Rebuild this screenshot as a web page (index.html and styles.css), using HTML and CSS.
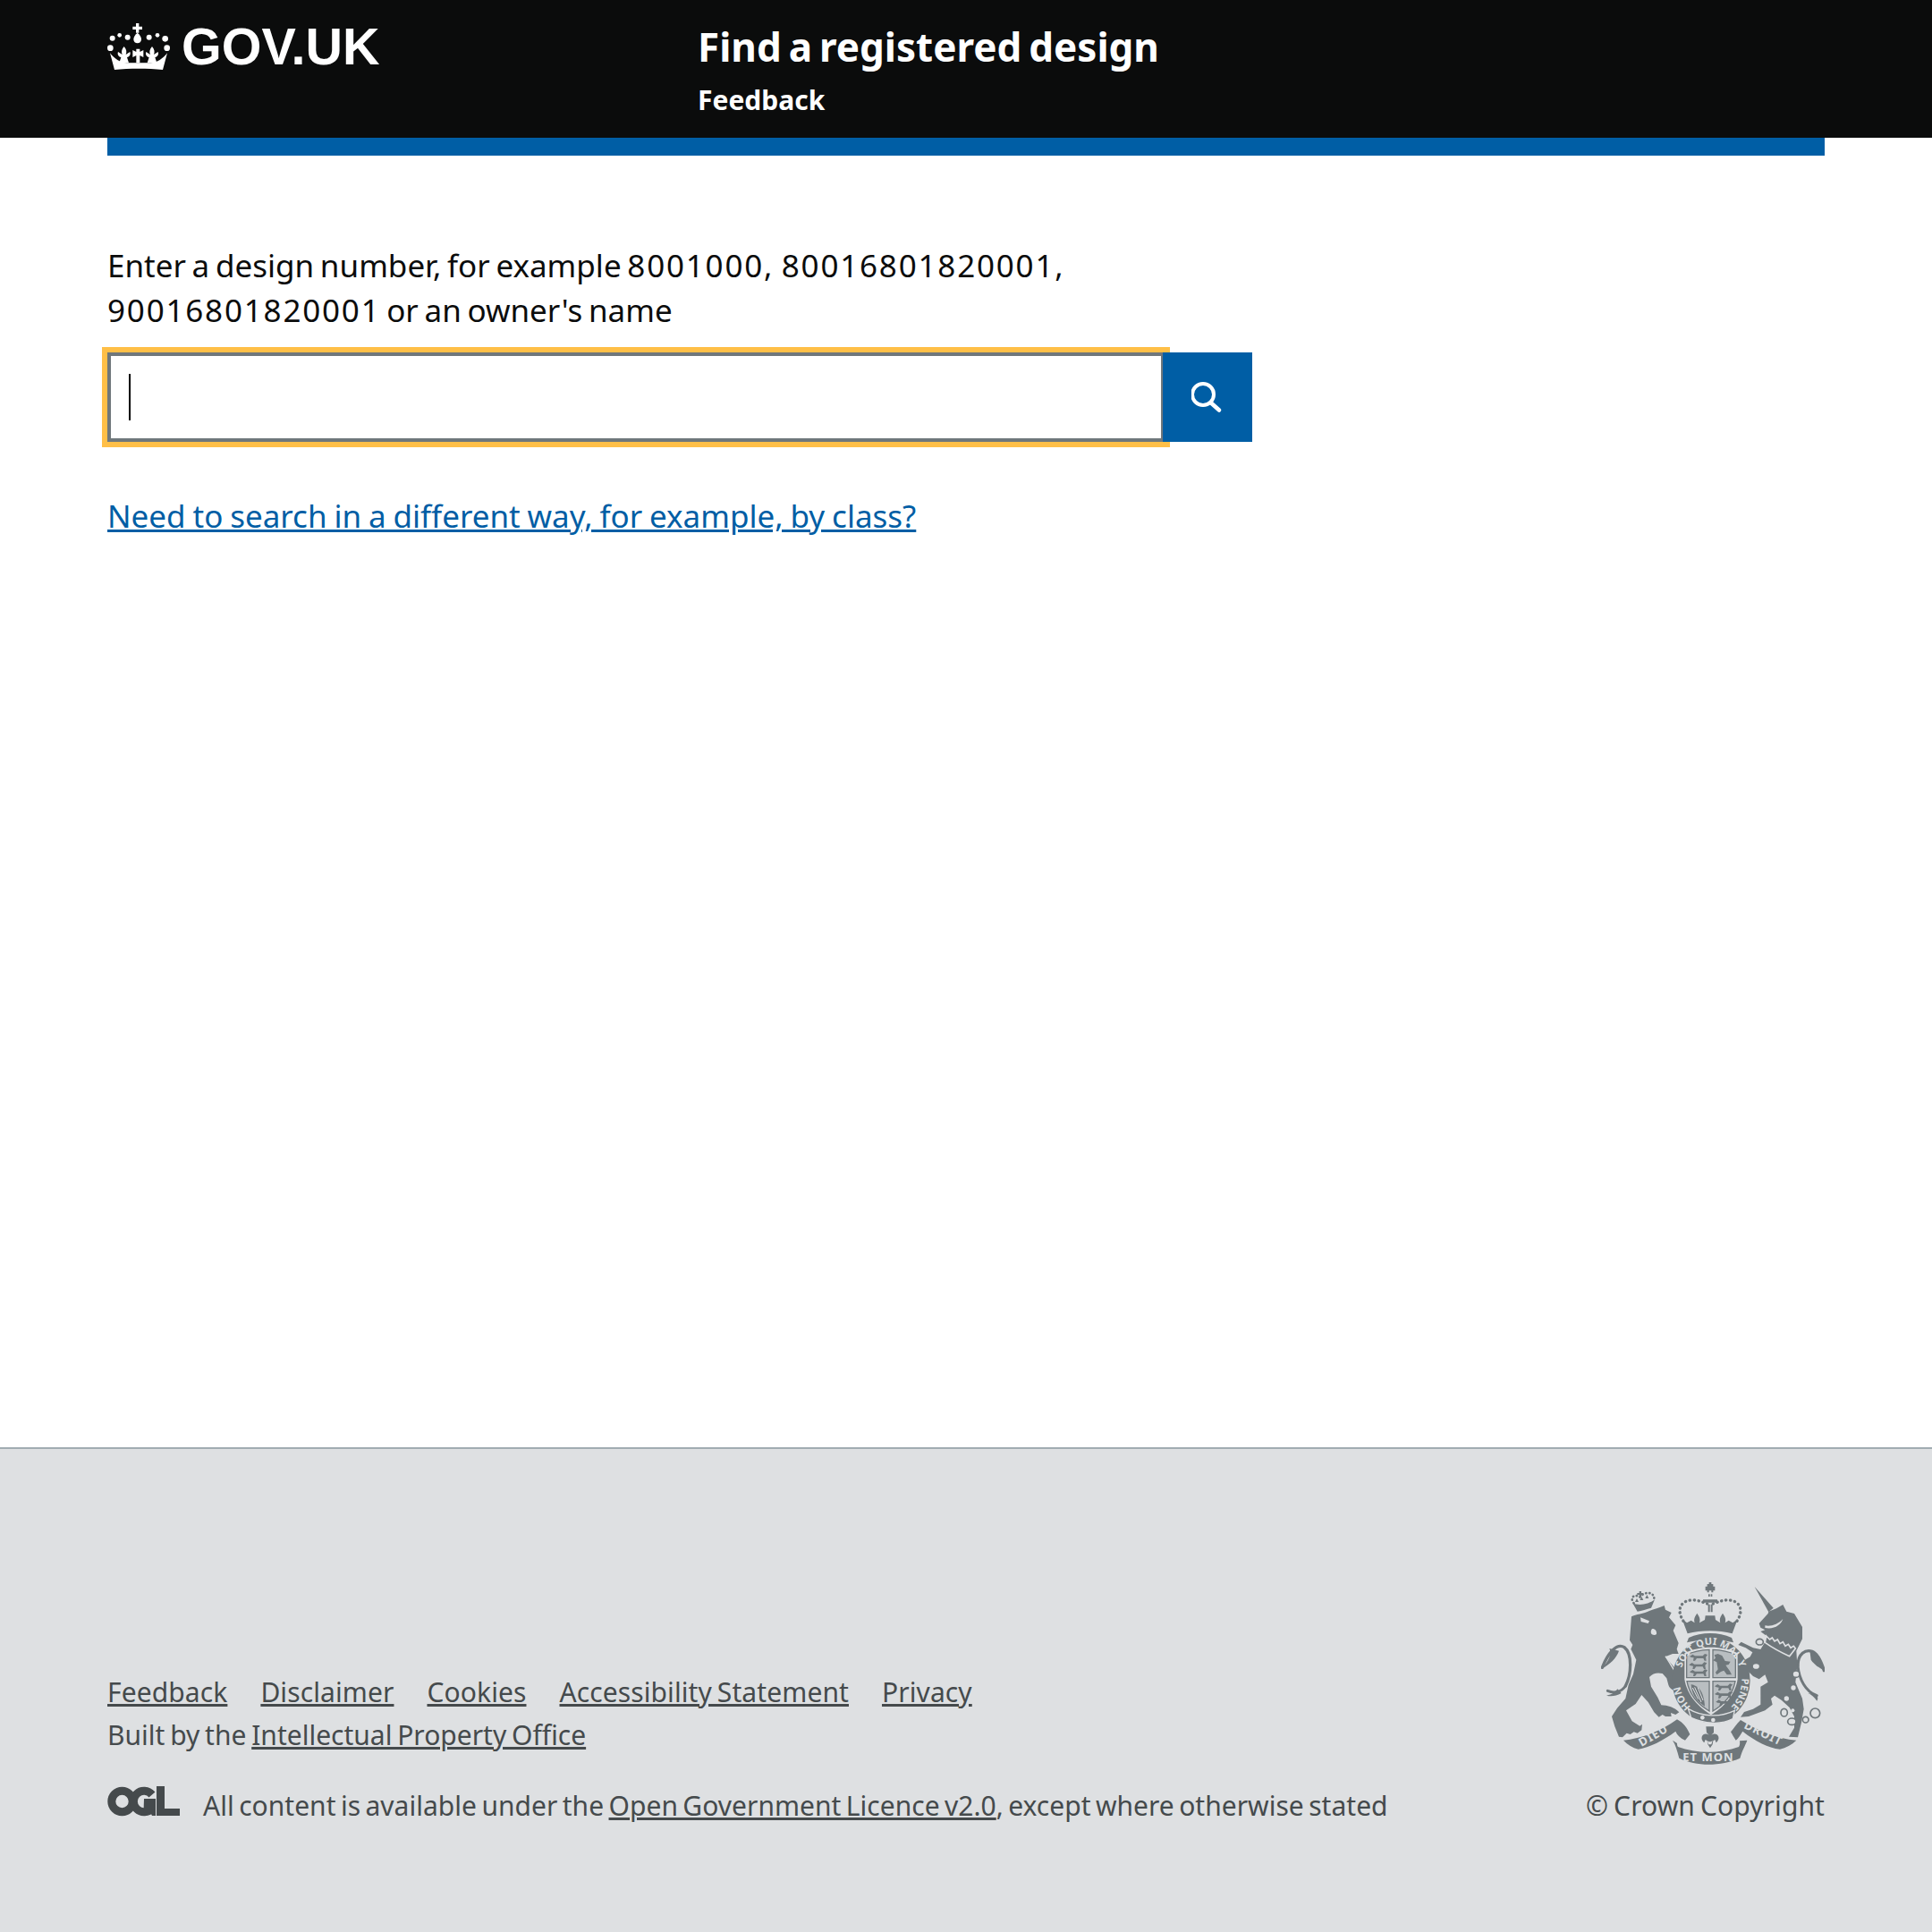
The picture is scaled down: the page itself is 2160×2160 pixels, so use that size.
FILE: index.html
```html
<!DOCTYPE html>
<html lang="en">
<head>
<meta charset="utf-8">
<title>Find a registered design</title>
<link rel="stylesheet" href="styles.css">
</head>
<body>
<header class="site-header">
  <div class="logo">
    <svg class="crown" viewBox="62 72 210 156" aria-hidden="true">
      <defs>
        <path id="fleur" d="M0 0c8 10 10 17 6 27l14-9c3 9-1 16-10 18l6 19h-32l6-19c-9-2-13-9-10-18l14 9c-4-10-2-17 6-27z"/>
      </defs>
      <g fill="#fff">
        <path d="M158 72h10v11h11v10h-11v11h-10V93h-11V83h11z"/>
        <path d="M163 104c9 7 13 15 13 22 0 8-6 13-13 13s-13-5-13-13c0-7 4-15 13-22z"/>
        <circle cx="79" cy="122" r="9"/><circle cx="103" cy="112" r="7"/><circle cx="130" cy="119" r="9"/>
        <circle cx="202" cy="119" r="9"/><circle cx="230" cy="112" r="7"/><circle cx="256" cy="124" r="10"/>
        <circle cx="72" cy="155" r="10"/><circle cx="262" cy="155" r="10"/>
        <path d="M86 228 71 172c14 18 34 33 56 33h80c22 0 42-15 56-33l-15 56c-50-5-112-5-162 0z"/>
        <use href="#fleur" x="118" y="150"/>
        <use href="#fleur" x="212" y="150"/>
        <path d="M159 158h12v10l12-6v24l-12-6v25h-12v-25l-12 6v-24l12 6z"/>
      </g>
    </svg>
    <span class="logo-text">GOV.UK</span>
  </div>
  <div class="service">
    <div class="service-name">Find a registered design</div>
    <a class="service-link" href="#">Feedback</a>
  </div>
</header>
<div class="bar-wrap"><div class="blue-bar"></div></div>
<main class="main">
  <label class="search-label" for="q">Enter a design number, for example <span class="num">8001000, 80016801820001,</span><br><span class="num">90016801820001</span> or an owner's name</label>
  <div class="search-row">
    <div class="input-wrap">
      <input id="q" class="search-input" type="text">
      <span class="caret"></span>
    </div>
    <button class="search-btn" type="button" aria-label="Search">
      <svg viewBox="0 0 36 36" class="search-icon" aria-hidden="true">
        <circle cx="13" cy="15" r="12" fill="none" stroke="#fff" stroke-width="4"/>
        <path d="M22 24.500l9 8" stroke="#fff" stroke-width="4.600" stroke-linecap="round"/>
      </svg>
    </button>
  </div>
  <a class="alt-link" href="#">Need to search in a different way, for example, by class?</a>
</main>
<footer class="footer">
  <div class="footer-left">
    <ul class="footer-links">
      <li><a href="#">Feedback</a></li>
      <li><a href="#">Disclaimer</a></li>
      <li><a href="#">Cookies</a></li>
      <li><a href="#">Accessibility Statement</a></li>
      <li><a href="#">Privacy</a></li>
    </ul>
    <p class="built">Built by the <a href="#">Intellectual Property Office</a></p>
    <div class="licence">
      <svg class="ogl" viewBox="0 0 82 34" aria-hidden="true">
        <g fill="none" stroke="#454a4c">
          <circle cx="16.500" cy="17" r="11.700" stroke-width="9"/>
          <path d="M50 9.500A11.700 11.700 0 1 0 50 24.500" stroke-width="9"/>
        </g>
        <path fill="#454a4c" d="M41 14h13v19h-4l-1.500-3-8-1zM55 0h9v25h17v8H55z"/>
      </svg>
      <span>All content is available under the <a href="#">Open Government Licence v2.0</a>, except where otherwise stated</span>
    </div>
  </div>
  <div class="footer-right">
    <svg class="crest" viewBox="90 60 750 612" role="img" aria-label="Royal coat of arms">
      <defs>
        <path id="garter" d="M391 478A104 118 0 1 1 518 484"/>
        <path id="passant" d="M0 9l10-7 8 5h26l7-7 9 3-6 8 2 12h-6l-4-8H24l-6 8h-6l2-10-8-1z"/>
      </defs>
      <g fill="none" stroke="#6f777b" stroke-linecap="round">
        <path d="M172 408C192 370 196 300 168 278C142 262 112 300 94 346" stroke-width="10"/>
        <path d="M172 408C158 428 134 434 112 424" stroke-width="9"/>
        <path d="M750 340C750 300 776 284 798 292C818 300 830 330 838 356" stroke-width="10"/>
        <path d="M750 340C754 384 776 428 814 440" stroke-width="9"/>
      </g>
      <g fill="#6f777b">
        <path d="M118 282C126 300 118 322 92 350C122 334 140 316 150 290z"/>
        <path d="M790 288C812 298 830 330 840 358C816 344 800 330 794 320z"/>
        <path d="M784 432C794 436 806 446 814 458C820 450 816 442 810 436z"/>
        <path d="M145 418C134 432 122 438 108 440C124 444 140 442 158 432z"/>
        <!-- lion body -->
        <path d="M192 175C205 168 235 165 252 156C268 150 285 146 302 138L306 152L326 162L318 178L340 204L332 222L350 264L344 284L350 300L330 300L305 310L340 350L362 398C368 412 360 424 346 424C330 424 320 416 316 404L310 382L296 366C280 362 264 364 252 378L258 410L280 446L292 472C312 472 338 480 352 496L340 504L324 498L326 510L306 510L296 504L284 512L268 496L248 462L226 438L206 468L174 490L194 526L220 542L228 536L226 556L212 566L200 562L188 570L176 566L162 580L150 578L136 544L126 510L144 482L172 450L182 404L198 368L208 320L198 300L190 284L196 270L186 254z"/>
        <!-- lion crown band -->
        <path d="M212 158L196 130C216 140 250 134 270 118L258 146C244 150 226 156 212 158z"/>
        <path d="M218 90h7v6h7v6h-7v8h-7v-8h-7v-6h7z"/>
        <path d="M204 126l6-12 6 12zM220 120l6-12 6 12zM238 114l6-12 6 12z"/>
        <!-- unicorn horn -->
        <path d="M605 75L668 146L652 160z"/>
        <!-- unicorn body -->
        <path d="M620 198L650 165L652 158L678 148L700 135L712 158L738 165L765 210L765 250L745 290L748 340L742 395L765 450L770 485L762 530L750 580L720 578L738 548L738 510L722 480L695 455L672 440L660 450L665 470L640 490L585 510L558 512L570 495L600 485L625 470L625 440L625 410L650 395L640 370L620 385L600 375L575 350L565 325L590 310L598 295L575 280L550 270L560 260L600 280L625 285L640 260L645 240L625 225L640 220L625 212z"/>
        <!-- royal crown -->
        <path d="M446 66h6v-6h8v6h6v8h6v14h-6v6h-6v-6h-8v6h-6v-6h-6V74h6z"/>
        <path d="M450 100h5v8h-5zM458 100h5v8h-5zM432 118h48v10h-48zM449 134h6v26h-6zM458 134h6v26h-6z"/>
        <path d="M380 232L362 184L378 196L392 188L404 196C400 184 404 176 412 164C420 176 424 184 420 196L438 186L440 172H472L474 186L490 196C486 184 490 176 498 164C506 176 510 184 506 196L518 188L532 196L548 184L530 232C484 220 426 220 380 232z"/>
        <path d="M384 246C428 226 484 226 528 246L534 262C482 250 430 250 378 262z"/>
        <!-- motto ribbons -->
        <path d="M165 590C225 585 290 560 345 520C365 530 380 550 388 570L372 590C355 582 345 572 340 560C300 590 250 615 215 620C195 615 180 605 165 590Z"/>
        <path d="M330 590L345 600C345 605 345 608 348 612C410 635 490 635 552 612C556 605 556 600 555 592L580 590C575 605 565 620 556 650C490 678 410 678 352 650C345 625 340 605 330 590Z"/>
        <path d="M525 562C535 550 545 535 558 522C610 555 680 585 745 590C730 605 710 615 690 620C650 615 610 595 565 560C558 570 550 585 542 590C535 580 530 570 525 562Z"/>
        <!-- fleur-de-lis -->
        <path d="M442 544h26v20l-8 8c10-6 20-4 24 6 2 8-2 14-8 20l-4-10-6 4-2 12-8 12-8-12-2-12-6-4-4 10c-6-6-10-12-8-20 4-10 14-12 24-6l-8-8z"/>
      </g>
      <g fill="#dee0e2">
        <path d="M222 178l30 12-4 8-24-6zM262 216c10 0 16 8 14 18-4 4-14 4-18-2-2-6 0-14 4-16z"/>
        <path d="M640 205c20 4 44-4 60-22-6 20-30 36-60 30z"/>
        <path d="M446 590c4 6 14 6 18 0l-4 14h-10z"/>
      </g>
      <path d="M306 308L362 398" stroke="#dee0e2" stroke-width="4" fill="none"/>
      <!-- unicorn collar -->
      <path d="M644 240L656 252L664 246L672 258L682 252L690 266L700 260L708 274L718 268L726 280L736 274L742 282L722 308C700 298 668 282 640 262z" fill="#6f777b" stroke="#dee0e2" stroke-width="5"/>
      <!-- chain links and spots -->
      <g fill="#dee0e2" stroke="#6f777b" stroke-width="5">
        <ellipse cx="622" cy="260" rx="12" ry="10"/>
        <ellipse cx="610" cy="342" rx="13" ry="11"/>
        <ellipse cx="744" cy="368" rx="12" ry="11"/>
        <ellipse cx="704" cy="497" rx="11" ry="13"/>
        <ellipse cx="730" cy="527" rx="14" ry="11"/>
        <ellipse cx="776" cy="521" rx="10" ry="10"/>
        <circle cx="808" cy="499" r="16"/>
      </g>
      <g fill="#dee0e2">
        <circle cx="735" cy="414" r="8"/><circle cx="712" cy="450" r="8"/><circle cx="733" cy="490" r="6"/>
      </g>
      <!-- crown bead arches -->
      <g fill="none" stroke="#6f777b" stroke-width="10" stroke-dasharray="1 14" stroke-linecap="round">
        <path d="M366 190C340 150 360 122 392 120C412 118 428 126 446 132M546 190C572 150 552 122 520 120C500 118 484 126 466 132"/>
      </g>
      <g fill="none" stroke="#6f777b" stroke-width="8" stroke-dasharray="1 11" stroke-linecap="round">
        <path d="M200 130C184 110 204 98 220 110C232 92 270 88 268 118"/>
      </g>
      <!-- shield garter -->
      <ellipse cx="459" cy="389" rx="131" ry="142" fill="#6f777b"/>
      <path d="M370 298C420 272 498 272 548 298L548 385C540 440 498 482 459 505C420 482 378 440 370 385z" fill="#dee0e2"/>
      <g fill="#b9bec1" stroke="#6f777b" stroke-width="4">
        <path d="M377 303C402 291 428 287 453 286V380H377z"/>
        <path d="M465 286C490 287 516 291 541 303V380H465z"/>
        <path d="M378 392H453V492C416 470 386 436 378 392z"/>
        <path d="M465 392H540C532 436 502 470 465 492z"/>
      </g>
      <g fill="#6f777b">
        <use href="#passant" x="387" y="300"/>
        <use href="#passant" x="385" y="328"/>
        <use href="#passant" x="387" y="352"/>
        <use href="#passant" x="471" y="400"/>
        <use href="#passant" x="471" y="426"/>
        <use href="#passant" x="475" y="452"/>
        <path d="M482 300l14 6 10 18 18 2-6 10-10 2 14 20 6 12h-16l-10-14-10 4-14 10-4-8 8-10-4-24-12-6 8-8-4-10z"/>
        <path d="M392 402C414 408 434 420 438 476C414 462 394 440 392 402z"/>
      </g>
      <path d="M404 412L426 462M414 412L432 456M397 414L416 452" stroke="#dee0e2" stroke-width="3" fill="none"/>
      <!-- garter buckle -->
      <path d="M382 484C430 512 490 514 538 490L532 518C490 540 436 534 392 514z" fill="#6f777b" stroke="#dee0e2" stroke-width="4"/>
      <circle cx="430" cy="514" r="7" fill="#dee0e2"/><circle cx="466" cy="522" r="7" fill="#dee0e2"/>
      <text class="crest-text"><textPath href="#garter" startOffset="0">HON</textPath></text>
      <text class="crest-text"><textPath href="#garter" startOffset="141">SOIT QUI MAL Y</textPath></text>
      <text class="crest-text"><textPath href="#garter" startOffset="444">PENSE</textPath></text>
      <text class="crest-motto" transform="translate(226 612) rotate(-30)">DIEU</text>
      <text class="crest-motto" transform="translate(567 548) rotate(26)">DROIT</text>
      <text class="crest-motto" x="364" y="660">ET MON</text>
    </svg>
    <p class="copyright">© Crown Copyright</p>
  </div>
</footer>
</body>
</html>
```

FILE: styles.css
```css
* { box-sizing: border-box; }
html, body { margin: 0; padding: 0; }
body {
  min-height: 2160px;
  display: flex;
  flex-direction: column;
  background: #fff;
  color: #0b0c0c;
  font-family: "Noto Sans", sans-serif;
}
.site-header {
  height: 154px;
  background: #0b0c0c;
  color: #fff;
  display: flex;
  padding: 16px 120px 0;
}
.logo {
  width: 660px;
  height: 60px;
  display: flex;
  align-items: center;
  gap: 13px;
  margin-top: 6px;
}
.crown { width: 70px; height: 52px; display: block; }
.logo-text {
  font-family: "Liberation Sans", sans-serif;
  font-weight: 700;
  font-size: 57.5px;
  line-height: 60px;
}
.service-name {
  font-weight: 700;
  font-size: 44px;
  line-height: 60px;
  margin-top: 6px;
  word-spacing: -3.5px;
}
.service-link {
  display: block;
  color: #fff;
  text-decoration: none;
  font-weight: 700;
  font-size: 30px;
  line-height: 40px;
  margin-top: 10px;
}
.bar-wrap { padding: 0 120px; }
.blue-bar { height: 20px; background: #005ea5; }
.main { flex: 1; padding: 98px 120px 0; }
.search-label { display: block; font-size: 35px; line-height: 50px; word-spacing: -2.4px; }
.num { letter-spacing: 1.8px; }
.search-row { display: flex; margin-top: 22px; width: 1280px; }
.input-wrap { position: relative; }
.search-input {
  display: block;
  width: 1182px;
  height: 100px;
  border: 4px solid #6f777b;
  border-radius: 0;
  background: #fff;
  outline: 6px solid #ffbf47;
  caret-color: transparent;
  padding: 0;
}
.caret {
  position: absolute;
  left: 24px;
  top: 24px;
  width: 2px;
  height: 52px;
  background: #000;
}
.search-btn {
  position: relative;
  z-index: 1;
  width: 100px;
  height: 100px;
  margin-left: -2px;
  padding: 0;
  border: 0;
  background: #005ea5;
  display: flex;
  align-items: center;
  justify-content: center;
}
.search-icon { width: 36px; height: 36px; display: block; }
.alt-link {
  display: inline-block;
  margin-top: 58px;
  font-size: 35px;
  line-height: 50px;
  word-spacing: -1.2px;
  color: #005ea5;
}
.footer {
  height: 542px;
  background: #dee0e2;
  border-top: 2px solid #a1acb2;
  color: #454a4c;
  padding: 0 120px;
  display: flex;
  justify-content: space-between;
  align-items: flex-end;
  font-size: 30px;
  word-spacing: -2px;
  letter-spacing: 0.1px;
}
.footer a { color: #454a4c; }
.footer-left { padding-bottom: 119px; }
.footer-links {
  list-style: none;
  margin: 0;
  padding: 0;
  display: flex;
  gap: 37px;
  line-height: 44px;
}
.built { margin: 4px 0 0; line-height: 44px; letter-spacing: 0; }
.licence {
  display: flex;
  align-items: center;
  gap: 25px;
  margin-top: 35px;
  line-height: 44px;
  letter-spacing: 0.02px;
  word-spacing: -2.4px;
}
.ogl { width: 82px; height: 34px; display: block; margin-bottom: 10px; }
.footer-right {
  display: flex;
  flex-direction: column;
  align-items: flex-end;
  padding-bottom: 119px;
}
.crest { width: 250px; height: 204px; display: block; }
.crest-text {
  font-family: "Noto Sans", sans-serif;
  font-size: 33px;
  font-weight: 700;
  letter-spacing: 0.5px;
  word-spacing: 0;
  fill: #dee0e2;
}
.crest-motto {
  font-family: "Noto Sans", sans-serif;
  font-size: 39px;
  font-weight: 700;
  letter-spacing: 3px;
  word-spacing: 0;
  fill: #dee0e2;
}
.copyright { margin: 24px 0 0; line-height: 44px; }
```
